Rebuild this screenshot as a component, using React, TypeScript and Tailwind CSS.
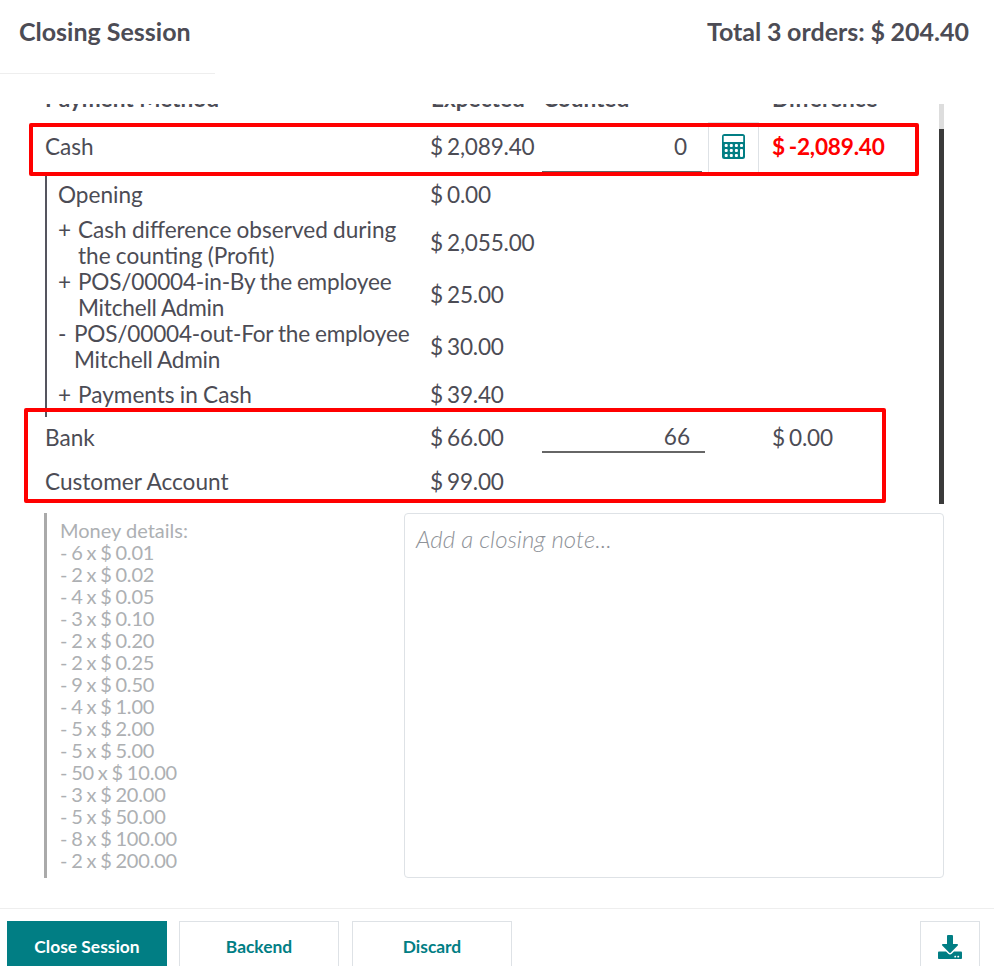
import { FaDownload } from "react-icons/fa";

const moneyDetails = [
  "- 6 x $ 0.01",
  "- 2 x $ 0.02",
  "- 4 x $ 0.05",
  "- 3 x $ 0.10",
  "- 2 x $ 0.20",
  "- 2 x $ 0.25",
  "- 9 x $ 0.50",
  "- 4 x $ 1.00",
  "- 5 x $ 2.00",
  "- 5 x $ 5.00",
  "- 50 x $ 10.00",
  "- 3 x $ 20.00",
  "- 5 x $ 50.00",
  "- 8 x $ 100.00",
  "- 2 x $ 200.00",
];

const cashLines = [
  { sign: "", label: "Opening", amount: "$ 0.00", height: "h-[44px]", tight: false },
  { sign: "+", label: "Cash difference observed during the counting (Profit)", amount: "$ 2,055.00", height: "h-[52px]", tight: false },
  { sign: "+", label: "POS/00004-in-By the employee Mitchell Admin", amount: "$ 25.00", height: "h-[52px]", tight: true },
  { sign: "-", label: "POS/00004-out-For the employee Mitchell Admin", amount: "$ 30.00", height: "h-[52px]", tight: true },
  { sign: "+", label: "Payments in Cash", amount: "$ 39.40", height: "h-[44px]", tight: false },
];

function CalculatorIcon() {
  const dots = [];
  for (let row = 0; row < 3; row++) {
    for (let col = 0; col < 4; col++) {
      if (col === 3 && row > 0) continue;
      dots.push(<rect key={`${row}-${col}`} x={2.7 + col * 5.1} y={10 + row * 5} width="3" height="3" rx="1" fill="white" />);
    }
  }
  return (
    <svg width="23" height="25" viewBox="0 0 23 25">
      <rect x="0" y="0" width="23" height="25" rx="2.5" fill="#017e84" />
      <rect x="1.7" y="2" width="19.5" height="6" fill="white" />
      {dots}
      <rect x="18" y="15" width="3" height="8" rx="1" fill="white" />
    </svg>
  );
}

export default function App() {
  return (
    <div className="relative h-[966px] w-[994px] overflow-hidden bg-white font-['Lato',sans-serif] text-[#4c4c55]">
      {/* header */}
      <div className="flex h-[73px] items-center justify-between pb-[9px] pl-[19px] pr-[25px] text-[25px] font-bold">
        <span>Closing Session</span>
        <span className="[word-spacing:-0.4px]">Total 3 orders: $ 204.40</span>
      </div>
      <div className="h-px w-[215px] bg-[#eeeeee]" />

      {/* payment table, scrolled down a bit */}
      <div className="mt-[30px] ml-[45px] flex h-[400px] w-[899px] overflow-hidden">
        <div className="w-[894px] text-[22.6px]">
          <div className="-mt-[22px] flex h-[40px] items-start font-bold">
            <span className="w-[386px]">Payment Method</span>
            <span className="w-[112px]">Expected</span>
            <span className="w-[229px]">Counted</span>
            <span>Difference</span>
          </div>

          <div className="flex h-[51px] items-center">
            <span className="w-[385px] pb-[2px]">Cash</span>
            <span className="w-[112px] pb-[2px] tracking-[-0.2px] [word-spacing:-1.5px]">$ 2,089.40</span>
            <div className="flex h-[51px] w-[160px] items-center justify-end border-b-2 border-[#666666] pr-[15px]">0</div>
            <div className="ml-[6px] flex h-[51px] w-[51px] items-center justify-center border-x border-t border-[#dee2e6] pb-[3px]">
              <CalculatorIcon />
            </div>
            <span className="ml-[13px] pb-[2px] font-bold tracking-[-0.2px] text-[#ff0000] [word-spacing:-1.5px]">$ -2,089.40</span>
          </div>

          <div className="border-l-2 border-[#55555f]">
            {cashLines.map((line) => (
              <div key={line.label} className={`flex items-center ${line.height}`}>
                <div className={`flex w-[383px] pl-[11px] leading-[26px] [word-spacing:-0.6px] ${line.tight ? "tracking-[-0.2px]" : ""}`}>
                  {line.sign && <span className={line.sign === "+" ? "w-[20px] shrink-0" : "w-[16px] shrink-0"}>{line.sign}</span>}
                  <span className="w-[350px]">{line.label}</span>
                </div>
                <span className="tracking-[-0.2px] [word-spacing:-1.5px]">{line.amount}</span>
              </div>
            ))}
          </div>

          <div className="flex h-[44px] items-center pb-[2px]">
            <span className="w-[385px]">Bank</span>
            <span className="w-[112px] tracking-[-0.2px] [word-spacing:-1.5px]">$ 66.00</span>
            <div className="flex h-[30px] w-[163px] items-center justify-end border-b-2 border-[#666666] pr-[15px]">66</div>
            <span className="ml-[67px] tracking-[-0.2px] [word-spacing:-1.5px]">$ 0.00</span>
          </div>
          <div className="flex h-[44px] items-center pb-[2px]">
            <span className="w-[385px]">Customer Account</span>
            <span className="tracking-[-0.2px] [word-spacing:-1.5px]">$ 99.00</span>
          </div>
        </div>
        <div className="flex h-full w-[5px] flex-col bg-[#dddddd]">
          <div className="mt-[25px] flex-1 bg-[#3a3a3a]" />
        </div>
      </div>

      {/* money details and closing note */}
      <div className="mt-[9px] ml-[44px] flex h-[365px] w-[900px]">
        <div className="w-[360px]">
          <div className="h-full border-l-[3px] border-[#aaaaaa] pl-[13px] pt-[6px] text-[20px] leading-[22px] text-[#adb0b3]">
            <div>Money details:</div>
            {moneyDetails.map((item) => (
              <div key={item} className="tracking-[-0.2px] [word-spacing:-1px]">{item}</div>
            ))}
          </div>
        </div>
        <div className="flex-1 rounded-[4px] border border-[#dee2e6] px-[11px] py-[7px] text-[24px] font-light italic text-[#8f9399]">
          Add a closing note...
        </div>
      </div>

      {/* footer */}
      <div className="mt-[30px] flex h-[60px] items-start gap-[12px] border-t border-[#eeeeee] pl-[7px] pt-[12px] text-[17.4px] font-bold text-[#017e84]">
        <div className="flex h-[52px] w-[160px] shrink-0 items-center justify-center bg-[#017e84] text-white">Close Session</div>
        <div className="flex h-[52px] w-[160px] shrink-0 items-center justify-center border border-[#dee2e6]">Backend</div>
        <div className="ml-[1px] flex h-[52px] w-[160px] shrink-0 items-center justify-center border border-[#dee2e6]">Discard</div>
        <div className="ml-[396px] flex h-[52px] w-[60px] shrink-0 items-center justify-center border border-[#dee2e6]">
          <FaDownload size={24} />
        </div>
      </div>

      {/* red annotation boxes */}
      <div className="absolute top-[123px] left-[29px] h-[53px] w-[890px] rounded-[2px] border-4 border-[#ff0000]" />
      <div className="absolute top-[408px] left-[24px] h-[95px] w-[862px] rounded-[2px] border-4 border-[#ff0000]" />
    </div>
  );
}
